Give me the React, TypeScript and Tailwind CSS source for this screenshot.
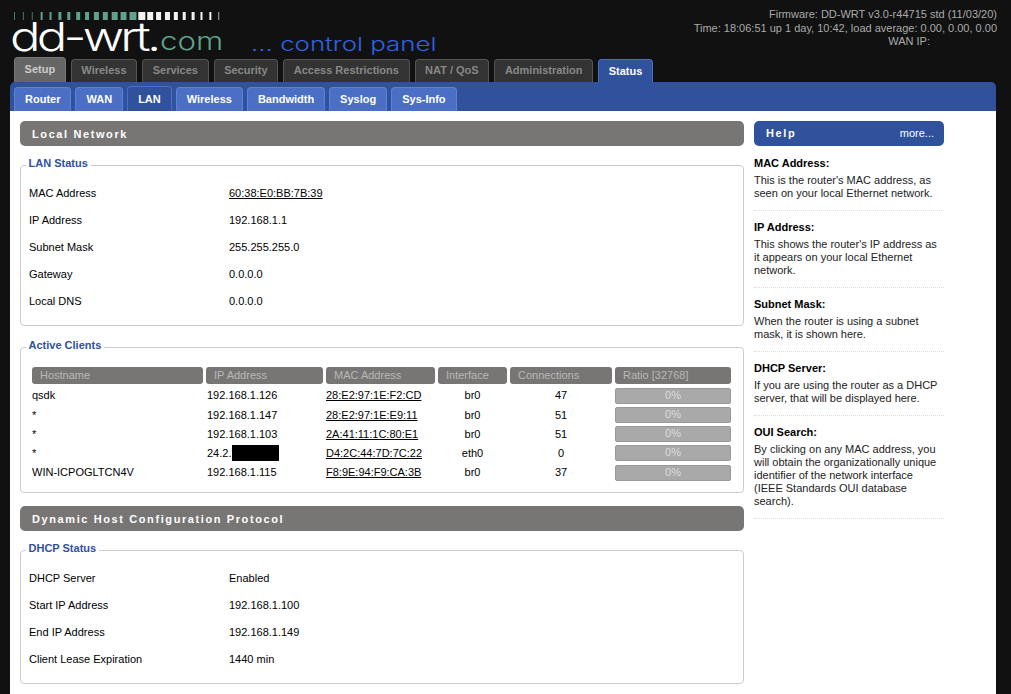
import React from 'react';

const mainTabs = ['Setup', 'Wireless', 'Services', 'Security', 'Access Restrictions', 'NAT / QoS', 'Administration', 'Status'];
const subTabs = ['Router', 'WAN', 'LAN', 'Wireless', 'Bandwidth', 'Syslog', 'Sys-Info'];

const ticks = [1, 1, 1, 2, 2, 3, 3, 4, 4, 5, 5, 6, 6, 7, 7, 6, 5, 5, 4, 3, 3, 2, 2, 1];

const clients = [
  { host: 'qsdk', ip: '192.168.1.126', mac: '28:E2:97:1E:F2:CD', iface: 'br0', conn: '47' },
  { host: '*', ip: '192.168.1.147', mac: '28:E2:97:1E:E9:11', iface: 'br0', conn: '51' },
  { host: '*', ip: '192.168.1.103', mac: '2A:41:11:1C:80:E1', iface: 'br0', conn: '51' },
  { host: '*', ip: '24.2.', hidden: true, mac: 'D4:2C:44:7D:7C:22', iface: 'eth0', conn: '0' },
  { host: 'WIN-ICPOGLTCN4V', ip: '192.168.1.115', mac: 'F8:9E:94:F9:CA:3B', iface: 'br0', conn: '37' },
];

const help = [
  { title: 'MAC Address:', text: "This is the router's MAC address, as seen on your local Ethernet network." },
  { title: 'IP Address:', text: "This shows the router's IP address as it appears on your local Ethernet network." },
  { title: 'Subnet Mask:', text: 'When the router is using a subnet mask, it is shown here.' },
  { title: 'DHCP Server:', text: 'If you are using the router as a DHCP server, that will be displayed here.' },
  { title: 'OUI Search:', text: 'By clicking on any MAC address, you will obtain the organizationally unique identifier of the network interface (IEEE Standards OUI database search).' },
];

const Bar = ({ children }: { children: React.ReactNode }) => (
  <div className="h-[25px] rounded-[5px] bg-[#787674] pl-3 text-[11px] leading-[26px] font-bold tracking-[1.6px] text-white">
    {children}
  </div>
);

const Box = ({ legend, className, children }: { legend: string; className: string; children: React.ReactNode }) => (
  <fieldset className={`rounded-[4px] border border-[#ccc] px-2 ${className}`}>
    <legend className="-ml-[3.5px] px-[3px] pb-[4px] text-[11px] leading-[13px] font-bold text-[#30519c]">{legend}</legend>
    {children}
  </fieldset>
);

const Row = ({ label, children }: { label: string; children: React.ReactNode }) => (
  <div className="flex h-[27px] items-center">
    <div className="w-[200px]">{label}</div>
    <div>{children}</div>
  </div>
);

export default function App() {
  return (
    <div className="h-[694px] overflow-hidden bg-[#111] font-['Liberation_Sans',Arial,sans-serif] text-[11px] text-black">
      {/* header */}
      <div className="relative h-[57px]">
        <svg className="absolute top-[12px] left-[14px]" width="208" height="9">
          {ticks.map((w, i) => (
            <rect key={i} x={i * 8.88} y="0" width={w} height="8" fill={i < 14 ? '#5ea18d' : '#f2f2f2'} opacity={w < 2 ? 0.7 : 1} />
          ))}
        </svg>
        <div className="absolute top-[14px] left-[10px] origin-left scale-x-[1.27] font-['Inter',sans-serif] text-[40px] leading-[46px] font-light tracking-[-3px] whitespace-nowrap text-white">
          dd-wrt.
        </div>
        <div className="absolute top-[26px] left-[160px] origin-left scale-x-[1.25] font-['Inter',sans-serif] text-[25px] leading-[30px] font-light whitespace-nowrap text-[#5ea18d]">
          com
        </div>
        <div className="absolute top-[33px] left-[251px] origin-left scale-x-[1.36] font-['Inter',sans-serif] text-[19px] leading-[24px] font-light whitespace-nowrap text-[#2f62e0]">
          ... control panel
        </div>
        <div className="absolute top-[8px] right-[14px] text-right text-[11px] leading-[13.5px] text-[#aaa]">
          <div>Firmware: DD-WRT v3.0-r44715 std (11/03/20)</div>
          <div>Time: 18:06:51 up 1 day, 10:42, load average: 0.00, 0.00, 0.00</div>
          <div className="mr-[67px]">WAN IP:</div>
        </div>
      </div>

      {/* main tabs */}
      <div className="flex h-[25px] items-end gap-[5px] pl-[14px] font-bold">
        {mainTabs.map((t) => (
          <div
            key={t}
            className={
              t === 'Setup'
                ? 'flex h-[25px] items-start rounded-t-[4px] border border-b-0 border-[#777] bg-[#666] px-[9.6px] pt-[3px] text-[#ccc]'
                : t === 'Status'
                  ? 'flex h-[23px] items-center rounded-t-[4px] border border-b-0 border-[#4a6fc4] bg-[#30519c] px-[9.6px] text-white'
                  : 'flex h-[23px] items-center rounded-t-[4px] border border-b-0 border-[#555] bg-[#333] px-[9.6px] pb-[2px] text-[#888]'
            }
          >
            {t}
          </div>
        ))}
      </div>

      {/* blue bar with sub tabs */}
      <div className="mr-[15px] ml-[10px] rounded-t-[5px] bg-[#30519c]">
        <div className="flex h-[29px] items-end gap-[4px] pl-[4px] font-bold text-white">
          {subTabs.map((t) => (
            <div
              key={t}
              className={
                t === 'LAN'
                  ? 'flex h-[25px] items-start rounded-t-[4px] border border-b-0 border-[#4a6fc4] bg-[#30519c] px-[10px] pt-[4px]'
                  : 'flex h-[24px] items-center rounded-t-[4px] border border-b-0 border-[#5f82d2] bg-[#4a6fc4] px-[10px]'
              }
            >
              {t}
            </div>
          ))}
        </div>

        {/* white panel */}
        <div className="flex h-[600px] gap-[10px] bg-white pt-[10px] pl-[10px]">
          <div className="w-[724px]">
            <Bar>Local Network</Bar>

            <Box legend="LAN Status" className="mt-[11px] h-[169px] pt-[6px]">
              <Row label="MAC Address">
                <span className="underline">60:38:E0:BB:7B:39</span>
              </Row>
              <Row label="IP Address">192.168.1.1</Row>
              <Row label="Subnet Mask">255.255.255.0</Row>
              <Row label="Gateway">0.0.0.0</Row>
              <Row label="Local DNS">0.0.0.0</Row>
            </Box>

            <Box legend="Active Clients" className="mt-[13px] h-[154px] pt-[11px]">
              <div className="ml-[3px] grid grid-cols-[171px_117px_109px_69px_102px_116px] gap-x-[3px]">
                {['Hostname', 'IP Address', 'MAC Address', 'Interface', 'Connections', 'Ratio [32768]'].map((h) => (
                  <div key={h} className="mb-[2px] h-[17px] rounded-[3px] bg-[#787674] pl-2 leading-[17px] text-[#b8b8b8]">
                    {h}
                  </div>
                ))}
                {clients.map((c, i) => (
                  <React.Fragment key={i}>
                    <div className="flex h-[19.25px] items-center">{c.host}</div>
                    <div className="flex h-[19.25px] items-center pl-px">
                      {c.ip}
                      {c.hidden && <span className="ml-px h-4 w-[47px] bg-black" />}
                    </div>
                    <div className="flex h-[19.25px] items-center underline">{c.mac}</div>
                    <div className="flex h-[19.25px] items-center justify-center">{c.iface}</div>
                    <div className="flex h-[19.25px] items-center justify-center">{c.conn}</div>
                    <div className="flex h-[19.25px] items-center">
                      <div className="h-4 w-full rounded-[2px] border border-[#999] bg-[#a9a9a9] text-center leading-[13px] text-[#ddd]">0%</div>
                    </div>
                  </React.Fragment>
                ))}
              </div>
            </Box>

            <div className="mt-[13px]">
              <Bar>Dynamic Host Configuration Protocol</Bar>
            </div>

            <Box legend="DHCP Status" className="mt-[11px] h-[142px] pt-[6px]">
              <Row label="DHCP Server">Enabled</Row>
              <Row label="Start IP Address">192.168.1.100</Row>
              <Row label="End IP Address">192.168.1.149</Row>
              <Row label="Client Lease Expiration">1440 min</Row>
            </Box>
          </div>

          {/* help */}
          <div className="w-[190px]">
            <div className="flex h-[25px] items-center justify-between rounded-[5px] bg-[#30519c] pr-[10px] pl-3 text-white">
              <span className="font-bold tracking-[1.6px]">Help</span>
              <span>more...</span>
            </div>
            <div className="mt-[11px]">
              {help.map((h) => (
                <div key={h.title} className="mb-[10px] border-b border-dotted border-[#ddd] pb-[10px]">
                  <div className="mb-[4px] leading-[13px] font-bold">{h.title}</div>
                  <div className="leading-[13px] text-[#222]">{h.text}</div>
                </div>
              ))}
            </div>
          </div>
        </div>
      </div>
    </div>
  );
}
